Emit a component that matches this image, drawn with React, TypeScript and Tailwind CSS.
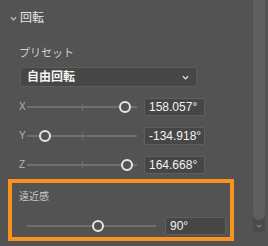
import React from 'react';

const FONT = "font-['Liberation_Sans','Noto_Sans_CJK_JP',sans-serif]";

function Chevron({ className }: { className: string }) {
  return (
    <svg viewBox="0 0 8 5" className={className} fill="none" stroke="currentColor" strokeWidth="1.4">
      <path d="M1 1l3 3 3-3" />
    </svg>
  );
}

type SliderProps = {
  label?: string;
  pct: number;
  text: string;
  tick?: boolean;
  trackW: number;
};

function Slider({ label, pct, text, tick = true, trackW }: SliderProps) {
  const left = 6 + pct * (trackW - 12);
  return (
    <div className="flex h-[18px] items-center">
      <span className="w-[8px] text-[10px] leading-none text-[#b4b4b4]">{label}</span>
      <div className="relative h-[2px] bg-[#6f6f6f]" style={{ width: trackW }}>
        {tick && <div className="absolute left-1/2 top-[-3px] h-[8px] w-[1px] bg-[#6f6f6f]" />}
        <div
          className="absolute top-[-5px] h-[12px] w-[12px] -translate-x-1/2 rounded-full border-2 border-[#e6e6e6] bg-[#535353]"
          style={{ left }}
        />
      </div>
      <div className="ml-auto flex h-[18px] w-[61px] items-center rounded-[2px] border border-[#5e5e5e] bg-[#464646] pl-[4px] text-[12px] text-[#f2f2f2]">
        {text}
      </div>
    </div>
  );
}

export default function App() {
  return (
    <div className={`flex h-[246px] w-[268px] overflow-hidden bg-[#535353] ${FONT}`}>
      <div className="w-[253px] shrink-0">
        <div className="flex items-center pl-[10px] pt-[10px]">
          <Chevron className="h-[5px] w-[7px] text-[#c8c8c8]" />
          <span className="ml-[3px] text-[12px] leading-[16px] text-[#e6e6e6]">回転</span>
        </div>

        <div className="mt-[20px] pl-[19px] text-[11px] leading-[14px] text-[#cfcfcf]">プリセット</div>

        <div className="ml-[20px] mt-[7px] flex h-[20px] w-[177px] items-center justify-between rounded-[3px] border border-[#5c5c5c] bg-[#474747] pl-[6px] pr-[7px]">
          <span className="text-[12px] font-bold text-[#f4f4f4]">自由回転</span>
          <Chevron className="h-[5px] w-[7px] text-[#ededed]" />
        </div>

        <div className="ml-[19px] mr-[48px] mt-[11px] flex flex-col gap-[11px]">
          <Slider label="X" pct={0.939} text="158.057°" trackW={110} />
          <Slider label="Y" pct={0.125} text="-134.918°" trackW={110} />
          <Slider label="Z" pct={0.957} text="164.668°" trackW={110} />
        </div>

        <div className="ml-[8px] mt-[5px] h-[62px] w-[226px] border-4 border-[#f7931e] pl-[7px] pr-[4px] pt-[8px]">
          <div className="text-[10px] leading-[12px] text-[#c8c8c8]">遠近感</div>
          <div className="mt-[14px]">
            <Slider pct={0.556} text="90°" tick={false} trackW={129} />
          </div>
        </div>
      </div>

      <div className="flex h-[232px] w-[12px] flex-col bg-[#4b4b4b]">
        <div className="h-[220px] rounded-b-[6px] bg-[#5e5e5e]" />
        <div className="flex flex-1 items-center justify-center">
          <Chevron className="h-[4px] w-[6px] text-[#8a8a8a]" />
        </div>
      </div>
    </div>
  );
}
